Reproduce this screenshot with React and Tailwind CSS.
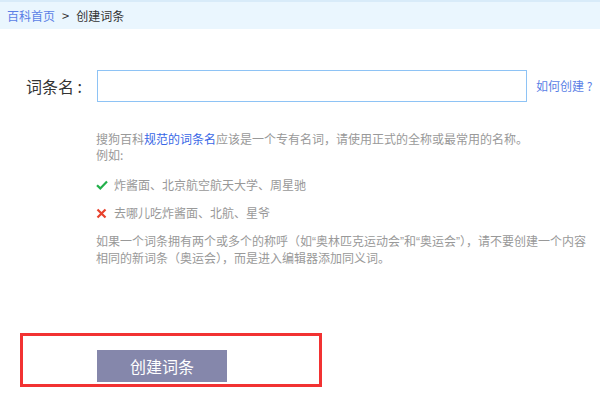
const font = { fontFamily: '"Microsoft YaHei", "Noto Sans CJK SC", "Noto Sans", sans-serif' };

const Check = () => (
  <svg width="12" height="10" viewBox="0 0 12 10" className="mr-[6px]">
    <path d="M1 5.2 L4.3 8.4 L11 1.4" fill="none" stroke="#22b04a" strokeWidth="2.2" />
  </svg>
);

const Cross = () => (
  <svg width="11" height="11" viewBox="0 0 11 11" className="mr-[7px]">
    <path d="M1.5 1.5 L9.5 9.5 M9.5 1.5 L1.5 9.5" fill="none" stroke="#e8412c" strokeWidth="2.2" />
  </svg>
);

// narrow latin quotes, like in the original page
const Q = ({ children }) => (
  <span style={{ fontFamily: '"Liberation Sans", sans-serif' }}>{children}</span>
);

const App = () => {
  return (
    <div className="w-[600px] h-[401px] bg-white overflow-hidden" style={font}>
      <div className="h-[29px] bg-[#eaf6fe] border-t-2 border-[#d8ebf9] flex items-center pl-[7px] text-[12px]">
        <a className="text-[#5b7fe6]">百科首页</a>
        <span className="mx-[7px] text-[#333] text-[13px]">&gt;</span>
        <span className="text-[#333]">创建词条</span>
      </div>

      <div className="flex items-center mt-[41px]">
        <label className="w-[97px] pl-[26px] text-[16px] text-[#333]">词条名 :</label>
        <input className="w-[430px] h-[32px] border border-[#8ec3f5] outline-none px-2 text-[14px]" />
        <a className="ml-[9px] text-[12px] text-[#5b7fe6]">如何创建 ?</a>
      </div>

      <div className="pl-[96px] mt-[29px] text-[12px] leading-[16px] text-[#999]">
        <p>
          搜狗百科<span className="text-[#3867e6]">规范的词条名</span>应该是一个专有名词，请使用正式的全称或最常用的名称。
        </p>
        <p>例如:</p>
        <p className="flex items-center mt-[14px]"><Check />炸酱面、北京航空航天大学、周星驰</p>
        <p className="flex items-center mt-[12px]"><Cross />去哪儿吃炸酱面、北航、星爷</p>
        <p className="mt-[12px] whitespace-nowrap">
          如果一个词条拥有两个或多个的称呼（如<Q>“</Q>奥林匹克运动会<Q>”</Q>和<Q>“</Q>奥运会<Q>”</Q>），请不要创建一个内容<br />
          相同的新词条（奥运会），而是进入编辑器添加同义词。
        </p>
      </div>

      <div className="ml-[20px] mt-[67px] w-[302px] h-[54px] border-[3px] border-[#f23232] pl-[74px] pt-[14px]">
        <button className="w-[130px] h-[32px] bg-[#8587ab] text-white text-[16px] flex items-center justify-center">
          创建词条
        </button>
      </div>
    </div>
  );
};

export default App;
